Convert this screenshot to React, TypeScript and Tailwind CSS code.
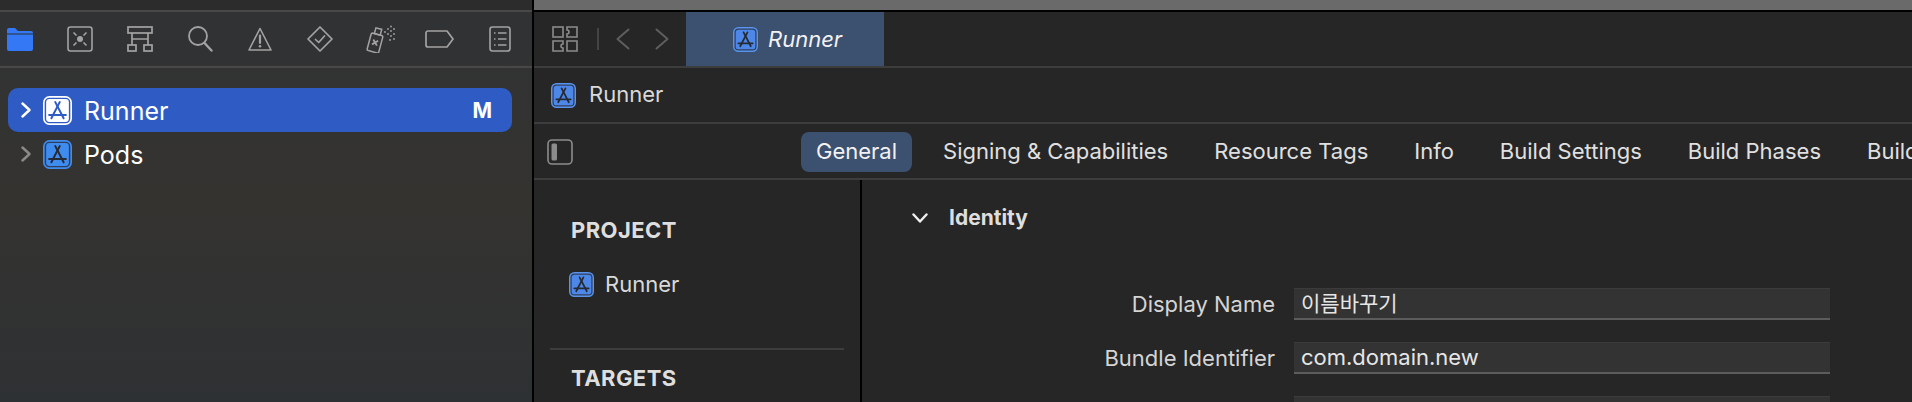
const FONT = "font-['Inter','Liberation_Sans','Noto_Sans_CJK_KR',sans-serif]";

function AppIcon({ size = 25, selected = false, bright = false }: { size?: number; selected?: boolean; bright?: boolean }) {
  const fill = selected ? "#ffffff" : bright ? "#3f8cf0" : "#4d88e8";
  const ink = selected ? "#2f5cc4" : "#262a33";
  const edge = selected ? "#ffffff" : bright ? "#3f8cf0" : "#5a94ee";
  return (
    <svg width={size} height={size} viewBox="0 0 26 26" className="shrink-0">
      <rect x="0.75" y="0.75" width="24.5" height="24.5" rx="5" fill={selected ? "#2f5cc4" : "#2f3e5c"} stroke={edge} strokeWidth="1.5" />
      <rect x="2.8" y="2.8" width="20.4" height="20.4" rx="3" fill={fill} />
      <g stroke={ink} strokeWidth="1.8" strokeLinecap="round" fill="none">
        <path d="M11 5.5 L18.5 20" />
        <path d="M15 5.5 L7.5 20" />
        <path d="M5.5 17 H20.5" />
      </g>
    </svg>
  );
}

function Chevron({ muted = false }: { muted?: boolean }) {
  return (
    <svg width="10" height="16" viewBox="0 0 10 16" fill="none" stroke="currentColor" strokeWidth="2.4" strokeLinecap="round" strokeLinejoin="round" className={`shrink-0 ${muted ? "text-[#8a8a8a]" : "text-white"}`}>
      <path d="M1.5 1.5 L8.5 8 L1.5 14.5" />
    </svg>
  );
}

function NavIcons() {
  const c = "#a3a3a3";
  return (
    <div className="flex h-[54px] shrink-0 items-center pl-[7px]">
      <svg width="26" height="24" viewBox="0 0 26 24" className="mr-[34px] shrink-0">
        <path d="M0 3 a2 2 0 0 1 2-2 h6 l3 3 h13 a2 2 0 0 1 2 2 v16 a2 2 0 0 1-2 2 H2 a2 2 0 0 1-2-2z" fill="#3478f6" />
        <path d="M0 7 H26" stroke="#2d2e30" strokeWidth="1" />
      </svg>
      <svg width="26" height="26" viewBox="0 0 26 26" fill="none" stroke={c} strokeWidth="1.6" className="mr-[34px] shrink-0">
        <rect x="1" y="1" width="24" height="24" rx="2.5" />
        <circle cx="13" cy="13" r="3" fill={c} stroke="none" />
        <path d="M6.5 6.5 L9.5 9.5 M19.5 6.5 L16.5 9.5 M6.5 19.5 L9.5 16.5 M19.5 19.5 L16.5 16.5" />
      </svg>
      <svg width="26" height="26" viewBox="0 0 26 26" fill="none" stroke={c} strokeWidth="1.7" className="mr-[35px] shrink-0">
        <rect x="1" y="1" width="24" height="6" />
        <rect x="1" y="19" width="8" height="6" />
        <rect x="17" y="19" width="8" height="6" />
        <path d="M5 7 V19 M21 7 V19 M5 13 H21" />
      </svg>
      <svg width="25" height="26" viewBox="0 0 25 26" fill="none" stroke={c} strokeWidth="1.8" strokeLinecap="round" className="mr-[35px] shrink-0">
        <circle cx="10" cy="10" r="9" />
        <path d="M16.5 17 L23.5 24.5" strokeWidth="2.4" />
      </svg>
      <svg width="24" height="25" viewBox="0 0 24 25" fill="none" stroke={c} strokeWidth="1.6" strokeLinejoin="round" className="mr-[35px] shrink-0">
        <path d="M12 1.5 L23 23 H1 Z" />
        <path d="M12 8.5 V16" strokeWidth="2.2" strokeLinecap="round" />
        <circle cx="12" cy="19.3" r="1.3" fill={c} stroke="none" />
      </svg>
      <svg width="26" height="26" viewBox="0 0 26 26" fill="none" stroke={c} strokeWidth="1.7" strokeLinejoin="round" className="mr-[33px] shrink-0">
        <path d="M13 1 L25 13 L13 25 L1 13 Z" />
        <path d="M8.5 13.5 L11.7 16.5 L17.5 10" strokeLinecap="round" />
      </svg>
      <svg width="30" height="28" viewBox="0 0 30 28" fill="none" stroke={c} strokeWidth="1.5" className="mr-[29px] shrink-0">
        <g transform="rotate(15 9 16)">
          <rect x="3.5" y="9" width="12" height="18" rx="1.5" />
          <rect x="6.5" y="3" width="6" height="6" />
          <path d="M7 15 L12 20 M12 15 L7 20" strokeWidth="1.8" />
        </g>
        <g fill={c} stroke="none">
          <circle cx="19" cy="7" r="0.9" /><circle cx="22" cy="4" r="0.9" /><circle cx="22" cy="9" r="0.9" /><circle cx="25" cy="1.5" r="0.9" />
          <circle cx="25" cy="6" r="0.9" /><circle cx="25" cy="11" r="0.9" /><circle cx="28" cy="4" r="0.9" /><circle cx="28" cy="9" r="0.9" /><circle cx="28" cy="14" r="0.9" /><circle cx="24" cy="15" r="0.9" />
        </g>
      </svg>
      <svg width="29" height="18" viewBox="0 0 29 18" fill="none" stroke={c} strokeWidth="1.7" strokeLinejoin="round" className="mr-[35px] shrink-0">
        <path d="M3 1 H22 L28 9 L22 17 H3 a2 2 0 0 1-2-2 V3 a2 2 0 0 1 2-2z" />
      </svg>
      <svg width="22" height="26" viewBox="0 0 22 26" fill="none" stroke={c} strokeWidth="1.6" className="shrink-0">
        <rect x="1" y="1" width="20" height="24" rx="2.5" />
        <path d="M5 7 H6.5 M5 13 H6.5 M5 19 H6.5 M9 7 H17.5 M9 13 H17.5 M9 19 H17.5" />
      </svg>
    </div>
  );
}

function Tab({ label, active = false }: { label: string; active?: boolean }) {
  return (
    <div className={`flex h-[40px] shrink-0 items-center rounded-[8px] px-[15px] pb-[2px] ${active ? "bg-[#3c5070] text-[#f2f2f2]" : "text-[#e0e0e0]"}`}>
      {label}
    </div>
  );
}

function Field({ label, value, small = false }: { label: string; value: string; small?: boolean }) {
  return (
    <div className="flex h-[32px] items-center">
      <div className="w-[413px] shrink-0 text-right text-[#d4d4d4]">{label}</div>
      <div className={`ml-[19px] flex h-[32px] w-[536px] shrink-0 items-center border-t border-b-2 border-t-[#3b3b3b] border-b-[#5c5c5c] bg-[#333333] pl-[7px] text-[#e6e6e6] ${small ? "text-[21px]" : "text-[22px]"}`}>
        {value}
      </div>
    </div>
  );
}

export default function App() {
  return (
    <div className={`${FONT} flex h-[402px] w-[1912px] overflow-hidden bg-black text-[22px] antialiased`}>
      {/* navigator */}
      <aside className="flex w-[532px] shrink-0 flex-col bg-linear-to-b from-[#303234] via-[#343330] to-[#2e3133]">
        <div className="h-[10px] shrink-0 bg-[#2c2c2c]" />
        <div className="h-[2px] shrink-0 bg-[#484848]" />
        <NavIcons />
        <div className="h-[2px] shrink-0 bg-[#484848]" />
        <div className="px-[8px] pt-[20px] text-[25px]">
          <div className="flex h-[44px] w-[504px] items-center rounded-[10px] bg-[#2f5cc4] pl-[13px] pr-[20px] text-white">
            <Chevron />
            <div className="ml-[12px]"><AppIcon size={29} selected /></div>
            <span className="ml-[12px] pt-[3px]">Runner</span>
            <span className="ml-auto pt-[2px] text-[21px] font-bold">M</span>
          </div>
          <div className="flex h-[44px] items-center pl-[13px] text-white">
            <Chevron muted />
            <div className="ml-[12px]"><AppIcon size={29} bright /></div>
            <span className="ml-[12px] pt-[3px]">Pods</span>
          </div>
        </div>
      </aside>

      {/* editor */}
      <main className="ml-[2px] flex min-w-0 flex-1 flex-col bg-[#262626]">
        <div className="h-[10px] shrink-0 bg-[#6a6a6a]" />
        <div className="h-[2px] shrink-0 bg-black" />

        <div className="flex h-[54px] shrink-0 items-center">
          <svg width="26" height="26" viewBox="0 0 26 26" fill="none" stroke="#8c8c8c" strokeWidth="1.6" className="ml-[18px] shrink-0">
            <rect x="1" y="1" width="10" height="10" />
            <path d="M15 1 H25 V11 H15 V8 a2 2 0 0 0 0-4z" />
            <path d="M1 15 H11 V18 a2 2 0 0 0 0 4 V25 H1z" />
            <path d="M15 15 H25 V25 H15z" />
          </svg>
          <div className="ml-[19px] h-[22px] w-[2px] shrink-0 bg-[#444444]" />
          <svg width="14" height="22" viewBox="0 0 14 22" fill="none" stroke="#5e5e5e" strokeWidth="2" strokeLinecap="round" strokeLinejoin="round" className="ml-[17px] shrink-0">
            <path d="M12.5 1.5 L1.5 11 L12.5 20.5" />
          </svg>
          <svg width="14" height="22" viewBox="0 0 14 22" fill="none" stroke="#5e5e5e" strokeWidth="2" strokeLinecap="round" strokeLinejoin="round" className="ml-[25px] shrink-0">
            <path d="M1.5 1.5 L12.5 11 L1.5 20.5" />
          </svg>
          <div className="ml-[17px] flex h-full w-[198px] shrink-0 items-center bg-[#3c5070] pl-[47px] text-[#f2f2f2]">
            <AppIcon />
            <span className="ml-[10px] italic">Runner</span>
          </div>
        </div>
        <div className="h-[2px] shrink-0 bg-[#3d3d3d]" />

        <div className="flex h-[54px] shrink-0 items-center pl-[17px] text-[#d9d9d9]">
          <AppIcon />
          <span className="ml-[13px] pb-[1px]">Runner</span>
        </div>
        <div className="h-[2px] shrink-0 bg-[#3d3d3d]" />

        <div className="flex h-[54px] shrink-0 items-center overflow-hidden pt-[2px]">
          <svg width="26" height="26" viewBox="0 0 26 26" fill="none" className="ml-[13px] shrink-0">
            <rect x="1" y="1" width="24" height="24" rx="4" stroke="#8c8c8c" strokeWidth="1.6" />
            <rect x="4.5" y="4.5" width="5.5" height="17" rx="1.5" fill="#8c8c8c" />
          </svg>
          <div className="ml-[228px] flex items-center gap-[16px] whitespace-nowrap">
            <Tab label="General" active />
            <Tab label="Signing & Capabilities" />
            <Tab label="Resource Tags" />
            <Tab label="Info" />
            <Tab label="Build Settings" />
            <Tab label="Build Phases" />
            <Tab label="Build Rules" />
          </div>
        </div>
        <div className="h-[2px] shrink-0 bg-[#3d3d3d]" />

        <div className="flex min-h-0 flex-1">
          {/* project list */}
          <div className="w-[328px] shrink-0 border-r-2 border-black pt-[38px]">
            <div className="pl-[37px] text-[22px] leading-[24px] font-bold tracking-[0.02em] text-[#dedede]">PROJECT</div>
            <div className="mt-[30px] flex h-[25px] items-center pl-[35px] text-[#d9d9d9]">
              <AppIcon />
              <span className="ml-[11px]">Runner</span>
            </div>
            <div className="mt-[51px] ml-[16px] h-[2px] w-[294px] bg-[#3d3d3d]" />
            <div className="mt-[16px] pl-[37px] text-[22px] leading-[24px] font-bold tracking-[0.02em] text-[#dedede]">TARGETS</div>
          </div>

          {/* settings */}
          <div className="min-w-0 flex-1 pt-[26px]">
            <div className="flex h-[24px] items-center pl-[50px]">
              <svg width="16" height="10" viewBox="0 0 16 10" fill="none" stroke="#f0f0f0" strokeWidth="2.4" strokeLinecap="round" strokeLinejoin="round" className="shrink-0">
                <path d="M1.5 1.5 L8 8.5 L14.5 1.5" />
              </svg>
              <span className="ml-[21px] text-[21px] font-bold text-[#dedede]">Identity</span>
            </div>
            <div className="mt-[58px] flex flex-col gap-[22px]">
              <Field label="Display Name" value="이름바꾸기" small />
              <Field label="Bundle Identifier" value="com.domain.new" />
              <Field label="" value="" />
            </div>
          </div>
        </div>
      </main>
    </div>
  );
}
